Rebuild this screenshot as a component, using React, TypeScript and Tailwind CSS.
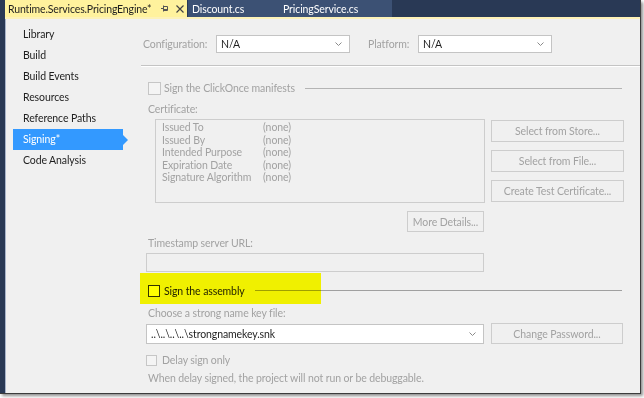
import React from "react";

const navItems = ["Library", "Build", "Build Events", "Resources", "Reference Paths", "Signing*", "Code Analysis"];
const certRows: [string, string][] = [
  ["Issued To", "(none)"],
  ["Issued By", "(none)"],
  ["Intended Purpose", "(none)"],
  ["Expiration Date", "(none)"],
  ["Signature Algorithm", "(none)"],
];

function Chevron() {
  return (
    <svg width="7" height="5" viewBox="0 0 7 5" className="shrink-0">
      <path d="M0.5 0.5 L3.5 3.5 L6.5 0.5" fill="none" stroke="#8a8a8a" strokeWidth="1" />
    </svg>
  );
}

function Combo({ value, className }: { value: string; className: string }) {
  return (
    <div className={`flex items-center justify-between border border-[#c4c4c4] bg-white pl-[4px] pr-[7px] text-[#1e1e1e] ${className}`}>
      <span>{value}</span>
      <Chevron />
    </div>
  );
}

function Button({ label, className }: { label: string; className: string }) {
  return (
    <div className={`flex items-center justify-center border border-[#cdcdcd] bg-[#f0f0f0] text-[#a2a2a2] ${className}`}>
      {label}
    </div>
  );
}

function Check({ className }: { className: string }) {
  return <div className={`shrink-0 border ${className}`} />;
}

export default function App() {
  return (
    <div className="h-[398px] w-[644px] overflow-hidden bg-white font-['Lato','Liberation_Sans',sans-serif] text-[10.5px] leading-[14px] tracking-[-0.1px]">
      <div className="flex h-[394px] w-[641px] border-r border-b border-[#3c3c3c] bg-[#293955] shadow-[2px_2px_3px_rgba(0,0,0,0.45)]">
        <div className="w-[5px] shrink-0" />
        <div className="flex min-w-0 flex-1 flex-col">
          {/* tab strip */}
          <div className="flex h-[17px] shrink-0 items-center text-[10.5px]">
            <div className="flex h-full w-[182px] shrink-0 items-center bg-[#fff29d] pl-[3px] text-[#1e1e1e]">
              <span className="w-[150px] shrink-0 tracking-[-0.15px]">Runtime.Services.PricingEngine*</span>
              <svg width="7" height="9" viewBox="0 0 7 9" className="ml-[3px] shrink-0">
                <path d="M0 4.5 H2 M2.5 1.5 V7.5 M2.5 2.5 H6.5 V6.5 H2.5 M2.5 5.5 H6.5" fill="none" stroke="#555" strokeWidth="1" />
              </svg>
              <svg width="8" height="8" viewBox="0 0 8 8" className="ml-[8px] shrink-0">
                <path d="M0.5 0.5 L7.5 7.5 M7.5 0.5 L0.5 7.5" fill="none" stroke="#444" strokeWidth="1.2" />
              </svg>
            </div>
            <div className="ml-[1px] flex h-full w-[204px] items-center bg-[#3c5174] text-white">
              <span className="w-[91px] pl-[4px]">Discount.cs</span>
              <span className="pl-[4px]">PricingService.cs</span>
            </div>
          </div>
          <div className="h-[2px] shrink-0 bg-[#fdf2b8]" />

          {/* property page */}
          <div className="flex min-h-0 flex-1 border-l border-[#a8b4ca] bg-[#f0f0f0]">
            <nav className="w-[135px] shrink-0 pl-[7px] pt-[5px]">
              {navItems.map((item) =>
                item === "Signing*" ? (
                  <div key={item} className="flex h-[21px] items-center">
                    <div className="h-full w-[110px] bg-[#3399ff] pl-[10px] leading-[21px] text-white">{item}</div>
                    <div className="h-0 w-0 border-y-[5px] border-l-[5px] border-y-transparent border-l-[#3399ff]" />
                  </div>
                ) : (
                  <div key={item} className="h-[21px] pl-[10px] leading-[21px] text-[#1e1e1e]">
                    {item}
                  </div>
                )
              )}
            </nav>

            <div className="relative flex min-w-0 flex-1 flex-col pt-[16px] text-[#a2a2a2]">
              <div className="flex h-[18px] items-center pl-[2px]">
                <span className="w-[73px]">Configuration:</span>
                <Combo value="N/A" className="h-[18px] w-[134px]" />
                <span className="ml-[18px] w-[50px]">Platform:</span>
                <Combo value="N/A" className="h-[18px] w-[134px]" />
              </div>
              <div className="mt-[12px] h-px bg-[#c4c4c4]" />
              <div className="h-px bg-white" />

              <div className="flex flex-col pl-[5px]">
                <div className="mt-[14px] flex h-[14px] items-center pl-[2px] pr-[18px]">
                  <Check className="h-[13px] w-[13px] border-[#c6c6c6] bg-[#f4f4f4]" />
                  <span className="ml-[3px]">Sign the ClickOnce manifests</span>
                  <div className="ml-[10px] h-px flex-1 bg-[#b4b4b4]" />
                </div>
                <div className="mt-[7px] h-[14px] pl-[2px]">Certificate:</div>

                <div className="mt-[3px] flex">
                  <div className="ml-[9px] h-[84px] w-[330px] border border-[#cdcdcd] bg-[#f0f0f0] pt-[1px] pl-[6px] leading-[12.5px]">
                    {certRows.map(([k, v]) => (
                      <div key={k} className="flex h-[12.5px]">
                        <span className="w-[101px]">{k}</span>
                        <span>{v}</span>
                      </div>
                    ))}
                  </div>
                  <div className="mt-[1px] ml-[6px] flex w-[133px] flex-col gap-[8px]">
                    <Button label="Select from Store..." className="h-[22px]" />
                    <Button label="Select from File..." className="h-[22px]" />
                    <Button label="Create Test Certificate..." className="h-[22px]" />
                  </div>
                </div>

                <div className="mt-[8px] flex w-[338px] justify-end">
                  <Button label="More Details..." className="h-[21px] w-[77px]" />
                </div>
                <div className="mt-[4px] h-[14px] pl-[2px]">Timestamp server URL:</div>
                <div className="mt-[3px] h-[19px] w-[338px] border border-[#cdcdcd] bg-[#f0f0f0]" />

                <div className="relative mt-[1px] h-[31px]">
                  <div className="flex h-full items-center pt-[4px] pl-[2px] pr-[18px]">
                    <Check className="h-[12px] w-[12px] border-[#333] bg-white" />
                    <span className="ml-[4px] text-[#1e1e1e]">Sign the assembly</span>
                    <div className="ml-[10px] h-px flex-1 bg-[#a0a0a0]" />
                  </div>
                  <div className="pointer-events-none absolute top-0 left-[-6px] h-full w-[181px] bg-[#ffff00] mix-blend-multiply" />
                </div>

                <div className="mt-[2px] h-[14px] pl-[2px]">Choose a strong name key file:</div>
                <div className="mt-[3px] flex items-start">
                  <Combo value="..\..\..\..\strongnamekey.snk" className="mt-[1px] h-[20px] w-[338px]" />
                  <Button label="Change Password..." className="ml-[7px] h-[21px] w-[132px]" />
                </div>
                <div className="mt-[10px] flex h-[12px] items-center">
                  <Check className="h-[11px] w-[11px] border-[#c6c6c6] bg-[#f4f4f4]" />
                  <span className="ml-[5px]">Delay sign only</span>
                </div>
                <div className="mt-[5px] h-[14px] pl-[2px]">When delay signed, the project will not run or be debuggable.</div>
              </div>
            </div>
          </div>
        </div>
      </div>
    </div>
  );
}
